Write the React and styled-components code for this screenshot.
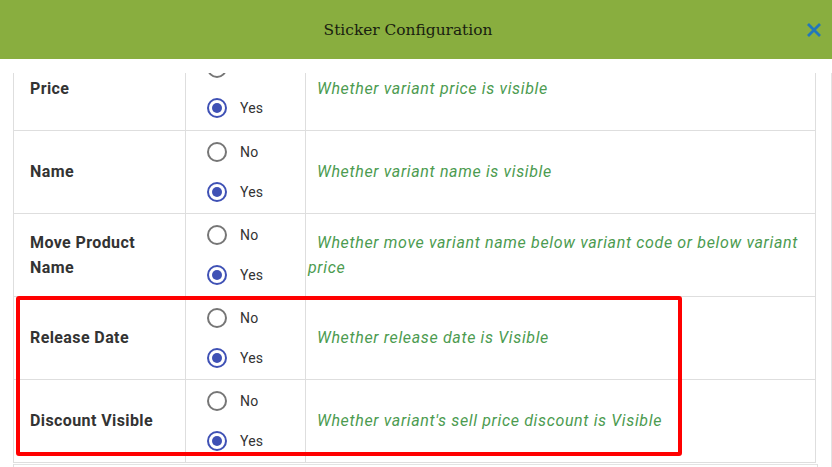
import React from 'react'
import styled, { createGlobalStyle } from 'styled-components'

const GlobalStyle = createGlobalStyle`
  html, body {
    margin: 0;
    padding: 0;
    background: #ffffff;
  }
  body {
    font-family: Roboto, "Liberation Sans", sans-serif;
    color: #333333;
  }
`

const Modal = styled.div`
  width: 832px;
  height: 467px;
  display: flex;
  flex-direction: column;
  overflow: hidden;
  background: #ffffff;
`

const Header = styled.header`
  height: 59px;
  flex-shrink: 0;
  background: #89ae3f;
  display: flex;
  align-items: center;
  padding-left: 18px;
`

const Title = styled.h2`
  flex: 1;
  margin: 0;
  text-align: center;
  font-family: "DejaVu Serif", "Liberation Serif", serif;
  font-weight: 400;
  font-size: 15.4px;
  color: #18200f;
`

const CloseButton = styled.button`
  width: 32px;
  height: 59px;
  border: 0;
  padding: 0;
  margin-right: 2px;
  background: transparent;
  display: flex;
  align-items: center;
  justify-content: center;
  cursor: pointer;
`

const Body = styled.div`
  flex: 1;
  padding-top: 14px;
  display: flex;
  flex-direction: column;
  min-height: 0;
`

const Scroller = styled.div`
  flex: 1;
  overflow: hidden;
  padding-left: 13px;
  border-right: 1px solid #e3e3e3;
`

const Inner = styled.div`
  margin-top: -26px;
  position: relative;
`

const Table = styled.table`
  width: 803px;
  border-collapse: collapse;
  table-layout: fixed;
  border-left: 1px solid #dedede;
  border-right: 1px solid #dedede;
`

const Row = styled.tr`
  height: 83px;
  border-bottom: 1px solid #dedede;
`

const LabelCell = styled.td`
  width: 172px;
  padding: 0 16px;
  font-size: 16px;
  font-weight: 700;
  letter-spacing: 0.4px;
  line-height: 25px;
  color: #333333;
  border-right: 1px solid #dedede;
  vertical-align: middle;
  box-sizing: border-box;
`

const OptionCell = styled.td`
  width: 120px;
  padding: 0 0 0 19px;
  border-right: 1px solid #dedede;
  vertical-align: middle;
  box-sizing: border-box;
`

const DescCell = styled.td`
  padding: 0 8px 0 2px;
  font-size: 16px;
  font-style: italic;
  letter-spacing: 0.65px;
  line-height: 25px;
  color: #4c9b50;
  text-indent: 9px;
  vertical-align: middle;
`

const TableEnd = styled.div`
  width: 803px;
  height: 20px;
  margin-top: 1px;
  border-top: 1px solid #e3e3e3;
  border-left: 1px solid #dedede;
  border-right: 1px solid #dedede;
`

const RadioGroup = styled.div`
  display: flex;
  flex-direction: column;
`

const RadioOption = styled.label`
  height: 40px;
  display: flex;
  align-items: center;
  gap: 11px;
  font-size: 14px;
  letter-spacing: 0.2px;
  color: #333333;
  cursor: pointer;
`

const Highlight = styled.div`
  position: absolute;
  left: 3px;
  top: 249px;
  width: 658px;
  height: 152px;
  border: 4px solid #ff0000;
  border-radius: 3px;
  pointer-events: none;
`

function RadioIcon({ checked }) {
  const color = checked ? '#3f51b5' : '#767676'
  return (
    <svg width="24" height="24" viewBox="0 0 24 24">
      <circle cx="12" cy="12" r="9" fill="none" stroke={color} strokeWidth="2" />
      {checked && <circle cx="12" cy="12" r="5" fill={color} />}
    </svg>
  )
}

const rows = [
  { label: 'Price', desc: 'Whether variant price is visible' },
  { label: 'Name', desc: 'Whether variant name is visible' },
  {
    label: 'Move Product Name',
    desc: 'Whether move variant name below variant code or below variant price',
  },
  { label: 'Release Date', desc: 'Whether release date is Visible' },
  { label: 'Discount Visible', desc: "Whether variant's sell price discount is Visible" },
]

export default function App() {
  return (
    <>
      <GlobalStyle />
      <Modal>
        <Header>
          <Title>Sticker Configuration</Title>
          <CloseButton aria-label="close">
            <svg width="16" height="16" viewBox="0 0 16 16">
              <path
                d="M2 2 L14 14 M14 2 L2 14"
                stroke="#2277bb"
                strokeWidth="2.8"
              />
            </svg>
          </CloseButton>
        </Header>
        <Body>
          <Scroller>
            <Inner>
              <Table>
                <tbody>
                  {rows.map((r, i) => (
                    <Row key={i}>
                      <LabelCell>{r.label}</LabelCell>
                      <OptionCell>
                        <RadioGroup>
                          <RadioOption>
                            <RadioIcon checked={false} />
                            No
                          </RadioOption>
                          <RadioOption>
                            <RadioIcon checked />
                            Yes
                          </RadioOption>
                        </RadioGroup>
                      </OptionCell>
                      <DescCell>{r.desc}</DescCell>
                    </Row>
                  ))}
                </tbody>
              </Table>
              <TableEnd />
              <Highlight />
            </Inner>
          </Scroller>
        </Body>
      </Modal>
    </>
  )
}
